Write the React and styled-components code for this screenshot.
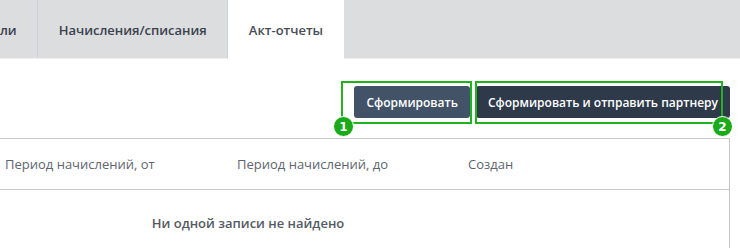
import React from "react";
import styled, { createGlobalStyle } from "styled-components";

const GlobalStyle = createGlobalStyle`
  html, body {
    margin: 0;
    padding: 0;
    background: #ffffff;
    font-family: "Open Sans", "Liberation Sans", sans-serif;
    overflow: hidden;
  }
`;

const Page = styled.div`
  width: 740px;
  height: 248px;
  overflow: hidden;
  background: #ffffff;
`;

const TabBar = styled.div`
  display: flex;
  height: 58px;
  background: #dcdddf;
  border-top: 1px solid #e6e7e9;
  border-bottom: 1px solid #eeeeee;
  box-sizing: content-box;
  margin-top: -1px;
`;

const Tab = styled.div`
  display: flex;
  align-items: center;
  padding: 0 20px 0 21px;
  font-size: 13px;
  font-weight: 600;
  color: ${(p) => (p.active ? "#474c57" : "#3b414d")};
  background: ${(p) => (p.active ? "#ffffff" : "transparent")};
  border-right: 1px solid ${(p) => (p.active ? "transparent" : "#cfd0d3")};
  margin-left: ${(p) => p.shift || 0}px;
  white-space: nowrap;
  height: ${(p) => (p.active ? "59px" : "58px")};
  padding-top: 1px;
  box-sizing: border-box;
`;

const Content = styled.div`
  padding: 27px 10px 0 0;
`;

const Actions = styled.div`
  position: relative;
  display: flex;
  justify-content: flex-end;
  gap: 6px;
`;

const Button = styled.button`
  height: 32px;
  padding: 0 12px;
  border: none;
  border-radius: 3px;
  font-family: "Open Sans", "Liberation Sans", sans-serif;
  font-size: 12px;
  font-weight: 600;
  color: #ffffff;
  background: ${(p) => (p.dark ? "#2e3a4a" : "#425368")};
  cursor: pointer;
`;

const Marker = styled.div`
  position: absolute;
  top: -5px;
  left: ${(p) => p.left}px;
  width: ${(p) => p.width}px;
  height: 43px;
  border: 2px solid #1fb41f;
  box-sizing: border-box;
  pointer-events: none;
`;

const Badge = styled.div`
  position: absolute;
  top: 30px;
  left: ${(p) => p.left}px;
  width: 21px;
  height: 21px;
  border-radius: 50%;
  background: #1aaa1a;
  border: 1px solid #ffffff;
  color: #ffffff;
  font-size: 12px;
  font-weight: 700;
  display: flex;
  align-items: center;
  justify-content: center;
  box-sizing: border-box;
  font-family: "DejaVu Sans", "Open Sans", sans-serif;
`;

const Table = styled.div`
  margin-top: 20px;
  margin-left: -234px;
  border: 1px solid #c8c8c8;
  border-bottom: none;
`;

const HeadRow = styled.div`
  display: grid;
  grid-template-columns: 230px 232px 231px 1fr;
  height: 50px;
  align-items: center;
  border-bottom: 1px solid #c8c8c8;
`;

const HeadCell = styled.div`
  padding: 0 8px;
  font-size: 13px;
  color: #5e6470;
  white-space: nowrap;
`;

const Empty = styled.div`
  padding: 24px 0 30px;
  text-align: center;
  font-size: 13px;
  font-weight: 600;
  color: #545a63;
`;

export default function App() {
  return (
    <Page>
      <GlobalStyle />
      <TabBar>
        <Tab shift={-82}>Показатели</Tab>
        <Tab>Начисления/списания</Tab>
        <Tab active>Акт-отчеты</Tab>
      </TabBar>
      <Content>
        <Actions>
          <Button>Сформировать</Button>
          <Button dark>Сформировать и отправить партнеру</Button>
          <Marker left={341} width={131} />
          <Marker left={475} width={248} />
          <Badge left={333}>1</Badge>
          <Badge left={712}>2</Badge>
        </Actions>
        <Table>
          <HeadRow>
            <HeadCell />
            <HeadCell>Период начислений, от</HeadCell>
            <HeadCell>Период начислений, до</HeadCell>
            <HeadCell>Создан</HeadCell>
          </HeadRow>
          <Empty>Ни одной записи не найдено</Empty>
        </Table>
      </Content>
    </Page>
  );
}
